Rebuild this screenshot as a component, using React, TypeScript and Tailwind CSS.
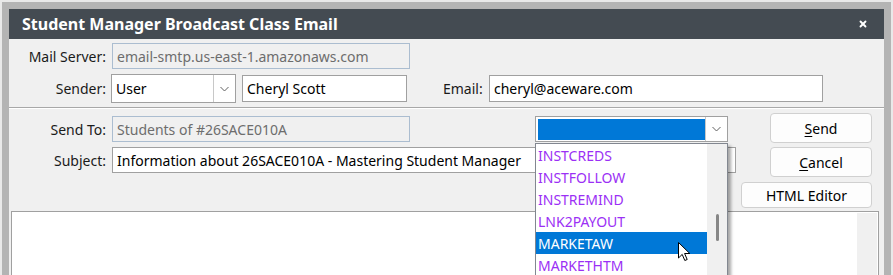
import { X } from 'lucide-react';

const listItems = ['INSTCREDS', 'INSTFOLLOW', 'INSTREMIND', 'LNK2PAYOUT', 'MARKETAW', 'MARKETHTM'];

function Chevron() {
  return (
    <svg width="9" height="6" viewBox="0 0 9 6" className="text-[#606060]">
      <path d="M0.5 1 L4.5 5 L8.5 1" fill="none" stroke="currentColor" strokeWidth="1" />
    </svg>
  );
}

function Cursor() {
  return (
    <svg width="13" height="20" viewBox="0 0 13 20" className="absolute left-[676px] top-[240px]">
      <path
        d="M0.5 0.5 L0.5 16 L4.2 12.4 L6.8 18.5 L9.2 17.5 L6.6 11.5 L11.8 11.5 Z"
        fill="#ffffff"
        stroke="#000000"
        strokeWidth="1"
        strokeLinejoin="round"
      />
    </svg>
  );
}

export default function App() {
  return (
    <div
      className="relative w-[893px] h-[275px] overflow-hidden bg-[#b4b4b4] border-t-2 border-x-2 border-[#e9e9e9] pt-[7px] pl-[7px] pr-[7px] text-[14px] text-black"
      style={{ fontFamily: '"Noto Sans", "Open Sans", sans-serif' }}
    >
      <div className="flex flex-col h-[300px] bg-[#f0f0f0]">
        {/* Title bar */}
        <div className="flex items-center justify-between h-[30px] shrink-0 bg-[#444b52] pl-[13px] pr-[16px]">
          <span className="text-white font-bold text-[16px]">Student Manager Broadcast Class Email</span>
          <X className="w-[10px] h-[10px] text-white" strokeWidth={4.5} />
        </div>

        {/* Server / sender */}
        <div className="flex items-center h-[26px] mt-[4px]">
          <label className="w-[97px] text-right text-[#1a1a1a]">Mail Server:</label>
          <div className="ml-[6px] w-[298px] h-[26px] flex items-center px-[4px] border border-[#abbdd0] bg-[#f0f0f0] text-[#6d6d6d]">
            email-smtp.us-east-1.amazonaws.com
          </div>
        </div>
        <div className="flex items-center h-[29px] mt-[5px]">
          <label className="w-[97px] text-right text-[#1a1a1a]">Sender:</label>
          <div className="ml-[5px] w-[125px] h-[29px] flex items-center border border-[#a0a0a0] bg-white">
            <span className="flex-1 pl-[4px]">User</span>
            <span className="w-[22px] h-[27px] flex items-center justify-center border-l border-[#c8c8c8]">
              <Chevron />
            </span>
          </div>
          <div className="ml-[6px] w-[165px] h-[27px] flex items-center px-[4px] border border-[#a0a0a0] bg-white">Cheryl Scott</div>
          <label className="ml-[36px] w-[46px] text-[#1a1a1a]">Email:</label>
          <div className="w-[334px] h-[27px] flex items-center px-[4px] border border-[#a0a0a0] bg-white">cheryl@aceware.com</div>
        </div>

        {/* separator */}
        <div className="mt-[4px] border-t border-[#a8a8a8] border-b border-b-white" />

        {/* Lower section */}
        <div className="relative flex items-start">
          <div className="flex-1 flex flex-col">
            <div className="flex items-center h-[26px] mt-[7px]">
              <label className="w-[97px] text-right text-[#1a1a1a]">Send To:</label>
              <div className="ml-[6px] w-[298px] h-[26px] flex items-center px-[4px] border border-[#abbdd0] bg-[#f0f0f0] text-[#6d6d6d]">
                Students of #26SACE010A
              </div>
              <div className="relative ml-[125px] w-[193px] h-[26px] flex items-center border border-[#a0a0a0] bg-white">
                <div className="ml-[2px] w-[168px] h-[21px] bg-[#0078d7]" />
                <span className="ml-auto w-[22px] h-[24px] flex items-center justify-center border-l border-[#c8c8c8]">
                  <Chevron />
                </span>
              </div>
            </div>
            <div className="flex items-center h-[26px] mt-[5px]">
              <label className="w-[97px] text-right text-[#1a1a1a]">Subject:</label>
              <div className="ml-[6px] w-[624px] h-[26px] flex items-center px-[4px] border border-[#a0a0a0] bg-white whitespace-nowrap overflow-hidden">
                Information about 26SACE010A - Mastering Student Manager
              </div>
            </div>
          </div>
          <div className="w-[131px] ml-[5px] mr-[12px] flex flex-col items-end mt-[4px]">
            <button className="w-[102px] h-[30px] rounded-[4px] border border-[#d0d0d0] bg-[#fdfdfd]">
              <span className="underline underline-offset-2">S</span>end
            </button>
            <button className="mt-[4px] w-[102px] h-[30px] rounded-[4px] border border-[#d0d0d0] bg-[#fdfdfd]">
              <span className="underline underline-offset-2">C</span>ancel
            </button>
            <button className="mt-[5px] w-[131px] h-[26px] rounded-[4px] border border-[#d0d0d0] bg-[#fdfdfd]">HTML Editor</button>
          </div>
        </div>

        {/* Body editor */}
        <div className="mt-[3px] ml-[2px] mr-[5px] flex-1 flex border border-[#a0a0a0] bg-white">
          <div className="flex-1" />
          <div className="w-[20px] mt-[1px] mr-[1px] bg-[#f0f0f0]" />
        </div>
      </div>

      {/* Open dropdown list */}
      <div className="absolute left-[533px] top-[141px] w-[193px] h-[150px] flex border border-[#828790] bg-white shadow-[3px_3px_3px_rgba(0,0,0,0.35)]">
        <div className="flex-1 flex flex-col">
          {listItems.map((item) => (
            <div
              key={item}
              className={`h-[22px] shrink-0 flex items-center pl-[2px] ${
                item === 'MARKETAW' ? 'bg-[#0078d7] text-white' : 'text-[#9b2ff5]'
              }`}
            >
              {item}
            </div>
          ))}
        </div>
        <div className="relative w-[20px] bg-[#f0f0f0]">
          <div className="absolute left-[9px] top-[70px] w-[3px] h-[27px] rounded-full bg-[#868686]" />
        </div>
      </div>

      <Cursor />
    </div>
  );
}
